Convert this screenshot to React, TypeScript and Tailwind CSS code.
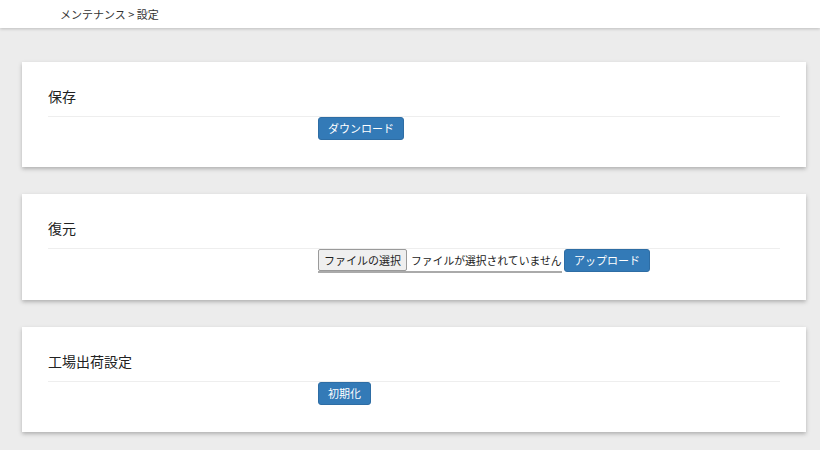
import React from "react";

const font = { fontFamily: '"Noto Sans CJK JP", "Noto Sans", sans-serif' };

function Card({ title, children }: { title: string; children: React.ReactNode }) {
  return (
    <div className="bg-white shadow-[0_2px_4px_rgba(0,0,0,0.25)] px-[26px] pt-[24px] pb-[27px]">
      <div className="text-[14px] leading-[20px] text-[#222] pb-[10px] border-b border-[#eeeeee]">{title}</div>
      <div className="pl-[270px] flex items-start">{children}</div>
    </div>
  );
}

function Btn({ children }: { children: React.ReactNode }) {
  return (
    <button className="block h-[23px] px-[9px] bg-[#337ab7] border border-[#2e6da4] rounded-[3px] text-white text-[11px] leading-[21px] whitespace-nowrap">
      {children}
    </button>
  );
}

export default function App() {
  return (
    <div className="w-[820px] h-[450px] bg-[#ececec] overflow-hidden" style={font}>
      <div className="h-[28px] bg-white shadow-[0_1px_3px_rgba(0,0,0,0.2)] pl-[60px] flex items-center text-[11px] text-[#333]">
        メンテナンス &gt; 設定
      </div>
      <div className="px-[22px] pt-[34px] pr-[14px] flex flex-col gap-[27px]">
        <Card title="保存">
          <Btn>ダウンロード</Btn>
        </Card>
        <Card title="復元">
          <div className="w-[244px] h-[24px] border-b-2 border-[#aaaaaa] flex items-start text-[#222] overflow-hidden shrink-0">
            <div className="shrink-0 whitespace-nowrap h-[22px] px-[5px] bg-[#efefef] border border-[#9a9a9a] rounded-[2px] text-[11px] leading-[20px]">
              ファイルの選択
            </div>
            <span className="ml-[4px] text-[10.8px] leading-[22px] whitespace-nowrap">ファイルが選択されていません</span>
          </div>
          <div className="ml-[2px] flex">
            <Btn>アップロード</Btn>
          </div>
        </Card>
        <Card title="工場出荷設定">
          <Btn>初期化</Btn>
        </Card>
      </div>
    </div>
  );
}
